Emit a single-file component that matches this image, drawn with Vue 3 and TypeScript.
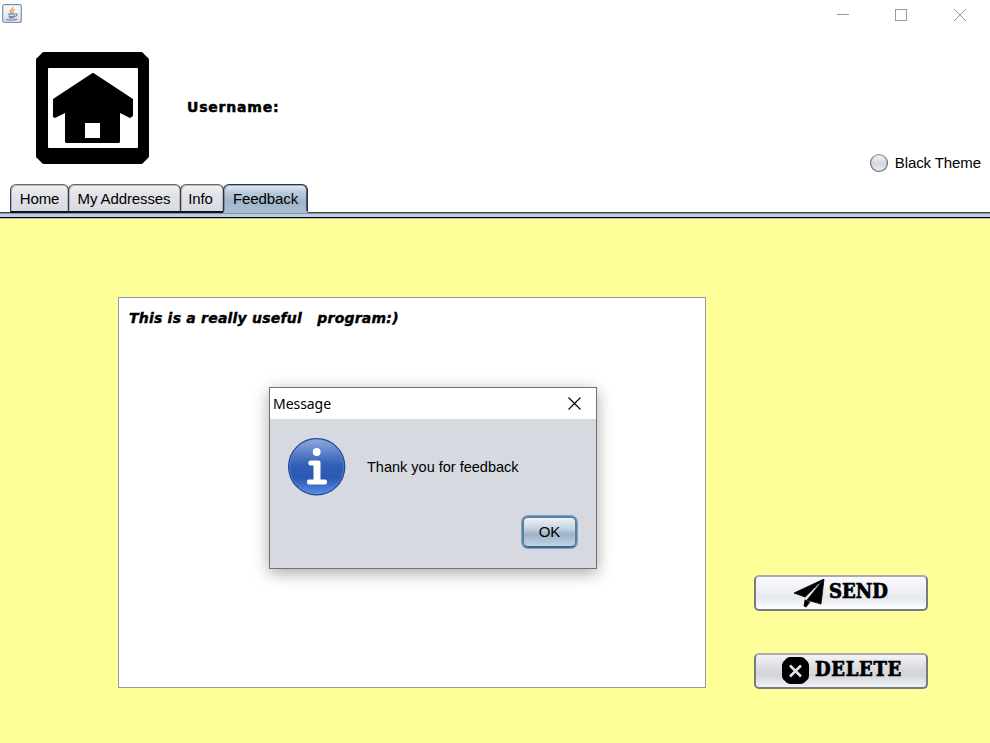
<script setup lang="ts">
import { ref } from 'vue'

const tabs = [
  { name: 'Home', cls: 'home' },
  { name: 'My Addresses', cls: 'addresses' },
  { name: 'Info', cls: 'info' },
  { name: 'Feedback', cls: 'feedback' },
]
const active = ref('Feedback')
const dialogOpen = ref(true)
const message = ref('This is a really useful \u00a0 program:)')
</script>

<template>
  <div class="window">
    <header class="titlebar">
      <svg class="java" width="20" height="20" viewBox="0 0 20 20">
        <defs>
          <linearGradient id="jbg" x1="0" y1="0" x2="0" y2="1">
            <stop offset="0" stop-color="#fdfdfe" />
            <stop offset="1" stop-color="#d9dde3" />
          </linearGradient>
        </defs>
        <rect x=".7" y=".7" width="18.6" height="17.8" rx="2" fill="url(#jbg)" stroke="#7892a9" stroke-width="1.2" />
        <path d="M10.5 3C12 5 8 5.6 8.2 7.4c.1 1 1 1.4 1.4 2M12.5 5.5c-2.2 1-2.1 1.8-1.5 2.6.4.6.1 1-.5 1.5" fill="none" stroke="#ec9148" stroke-width="1.3" />
        <path d="M6 10.2h7.3M6.5 12.1c2 .6 4.6.6 6.5 0M7 13.8c1.8.5 3.8.5 5.4 0M13.5 10c2.3-.4 2.2 2-.6 2.4M4.2 15c-.8 1.5 8.5 1.8 11 .1" fill="none" stroke="#6e8ca8" stroke-width="1.2" />
      </svg>
      <svg class="controls" width="130" height="14" viewBox="0 0 130 14" fill="none" stroke="#999">
        <path d="M0 7.5h12" />
        <rect x="58.5" y="2.5" width="11" height="11" />
        <path d="M117 2l12 12M129 2l-12 12" />
      </svg>
    </header>

    <section class="profile">
      <svg class="house" width="113" height="112" viewBox="0 0 113 112">
        <path d="M8 0h97q2 0 3 2l3 3q2 1 2 3v96q0 2-2 3l-3 3q-1 2-3 2H8q-2 0-3-2l-3-3q-2-1-2-3V8q0-2 2-3l3-3q1-2 3-2z" />
        <rect x="12" y="16" width="90" height="80" rx="1" fill="#fff" />
        <path d="M55 22q2-2 4 0l38 25v17l-3 2-10-5v29l-1 1H30l-1-1V61l-10 5-2-1V47z" />
        <rect x="49" y="71" width="15" height="15" fill="#fff" />
      </svg>
      <span class="username">Username:</span>
      <label class="theme"><span class="radio"></span><span>Black Theme</span></label>
    </section>

    <nav class="tabs">
      <button v-for="t in tabs" :key="t.name" :class="['tab', t.cls, { active: active === t.name }]" @click="active = t.name">{{ t.name }}</button>
    </nav>
    <div class="rule"></div>

    <main class="panel">
      <div class="editor">{{ message }}</div>
      <div class="actions">
        <button class="action send">
          <svg width="31" height="29" viewBox="0 0 31 29">
            <path d="M0 14L30 0 11 18zM30 0l-3 25-14-4zM11 21l5 2-4 5-2-1z" stroke="#000" stroke-width=".8" />
            <path d="M25 5L12 18l-2 3" fill="none" stroke="#b8b9bd" stroke-width=".8" stroke-dasharray="4 1" />
          </svg>
          <span>SEND</span>
        </button>
        <button class="action delete">
          <svg width="27" height="27" viewBox="0 0 27 27">
            <path d="M8 0h11q3 0 5 3 3 2 3 5v11q0 3-3 5-2 3-5 3H8q-3 0-5-3-3-2-3-5V8q0-3 3-5 2-3 5-3z" />
            <path d="M8 8.5l11 11M19 8.5l-11 11" stroke="#e2e3e7" stroke-width="2.6" />
          </svg>
          <span>DELETE</span>
        </button>
      </div>
    </main>

    <div v-if="dialogOpen" class="dialog">
      <div class="dialog-title">
        <span>Message</span>
        <svg width="13" height="13" viewBox="0 0 13 13"><path d="M.5.5l12 12M12.500.5l-12 12" stroke="#000" stroke-width="1.1" /></svg>
      </div>
      <div class="dialog-content">
        <svg class="info-icon" width="58" height="58" viewBox="0 0 58 58">
          <defs>
            <linearGradient id="blue" x1="0" y1="0" x2="0" y2="1">
              <stop offset="0" stop-color="#91abdf" />
              <stop offset=".25" stop-color="#5c80c9" />
              <stop offset=".48" stop-color="#315eb6" />
              <stop offset=".7" stop-color="#2a59b5" />
              <stop offset="1" stop-color="#5b8ce8" />
            </linearGradient>
          </defs>
          <circle cx="28.700" cy="28.700" r="28.1" fill="url(#blue)" stroke="#204694" stroke-width="1.2" />
          <circle cx="28.700" cy="28.700" r="27" fill="none" stroke="#6e92dc" stroke-width=".7" opacity=".7" />
          <g fill="#fff">
            <circle cx="28.700" cy="14" r="3.900" />
            <path d="M22.500 22.500h8q2 0 2 2V41.500H37q2 0 2 2v1q0 2-2 2H21q-2 0-2-2v-1q0-2 2-2h4.500V27.500h-3q-2.200 0-2.200-2.500t2.200-2.500z" />
          </g>
        </svg>
        <span>Thank you for feedback</span>
      </div>
      <div class="dialog-footer"><button class="ok" @click="dialogOpen = false">OK</button></div>
    </div>
  </div>
</template>

<style>
body { background: #fff; overflow: hidden; }
</style>

<style scoped>
.window { position: relative; isolation: isolate; width: 990px; height: 743px; display: flex; flex-direction: column; font: 15px/18px "Liberation Sans", Arial, sans-serif; letter-spacing: -.1px; color: #000; background: #fff; }
button { font: inherit; letter-spacing: inherit; color: inherit; box-sizing: border-box; padding: 0; margin: 0; white-space: nowrap; }
svg { display: block; flex: none; }
.titlebar { height: 30px; flex: none; box-sizing: border-box; display: flex; justify-content: space-between; align-items: flex-start; padding: 4px 23px 0 2px; }
.controls { margin-top: 3px; }
.profile { height: 154px; flex: none; box-sizing: border-box; display: flex; padding: 22px 9px 0 36px; }
.username { margin: 45px 0 0 38px; font: bold 14px/20px "DejaVu Sans", sans-serif; letter-spacing: .8px; -webkit-text-stroke: .5px #000; }
.theme { margin: 102px 0 0 auto; display: flex; align-items: center; height: 18px; gap: 7px; }
.radio { box-sizing: border-box; width: 18px; height: 18px; border: 1.5px solid #60646c; border-top-color: #8b8e95; border-radius: 50%; background: linear-gradient(#f3f3f5, #d4d7dc 55%, #eaedf1); box-shadow: inset 0 0 1px #777b83; }
.tabs { height: 28px; flex: none; display: flex; padding-left: 10px; }
.tab { height: 29px; padding-top: 2px; border: 1px solid #3c3c48; border-top-color: #66666f; border-bottom: 2px solid #101020; border-radius: 6px 6px 0 0; box-shadow: inset 1px 1px 0 #85858f80, inset -1px 0 0 #85858f80; background: linear-gradient(#f4f4f6, #e3e4e8 35%, #d9dbe1); }
.tab + .tab { margin-left: -1px; }
.home { width: 59px; }
.addresses { width: 113px; padding-right: 1px; }
.info { width: 44px; padding-right: 3px; }
.feedback { width: 85px; }
.tab.active { border-color: #25384f; border-bottom-color: #a9bed5; box-shadow: inset 1px 1px 0 #50637a80, inset -1px 0 0 #25384fc0; background: linear-gradient(#e5edf4, #b8c9da 30%, #9fb5c9 65%, #a9bed3); }
.rule { height: 6px; flex: none; box-sizing: border-box; border-top: 1px solid #444652; border-bottom: 1px solid #000014; background: #b9cde5; box-shadow: inset 0 1px #8693a9; position: relative; z-index: -1; }
.panel { flex: 1; background: #ffff99; border-top: 1px solid #c6c691; box-sizing: border-box; display: flex; padding: 78px 0 0 118px; gap: 48px; }
.editor { width: 588px; height: 391px; flex: none; box-sizing: border-box; border: 1px solid #9297a1; background: #fff; padding: 10px 10px; font: italic bold 14px/20px "DejaVu Sans", sans-serif; letter-spacing: .22px; -webkit-text-stroke: .4px #000; white-space: pre; }
.actions { display: flex; flex-direction: column; gap: 42px; padding-top: 278px; }
.action { width: 174px; height: 36px; border: 2px solid #777b85; border-top-color: #aaaab0; border-radius: 5px; display: flex; align-items: center; justify-content: center; font: bold 20px/22px "DejaVu Serif Condensed", "DejaVu Serif", serif; font-stretch: condensed; -webkit-text-stroke: .7px #000; }
.action span { margin-top: -5px; }
.send { gap: 4px; letter-spacing: 0; background: linear-gradient(#fafafd, #eeeff5 45%, #e5e8f0 65%, #fff); }
.delete { gap: 6px; padding-left: 2px; letter-spacing: .7px; background: linear-gradient(#f3f3f5, #d9dae0 45%, #d2d4da 62%, #f0f2f8); }
.delete svg { margin-top: -1px; }
.dialog { position: absolute; left: 269px; top: 387px; width: 328px; height: 182px; box-sizing: border-box; border: 1px solid #717176; background: #d6d9e0; box-shadow: 0 4px 15px rgba(0, 0, 0, .34); }
.dialog-title { height: 31px; box-sizing: border-box; display: flex; align-items: center; justify-content: space-between; padding: 0 15px 1px 3px; background: #fff; font: 14px/20px "Noto Sans", sans-serif; letter-spacing: -.05px; }
.dialog-title span { padding-top: 2px; }
.dialog-content { height: 96px; display: flex; align-items: center; padding-left: 18px; gap: 21px; font-size: 14.5px; letter-spacing: 0; }
.dialog-footer { display: flex; justify-content: flex-end; padding-right: 19px; }
.ok { width: 55px; height: 32px; margin-top: 1px; border: 2px solid #5a7f9f; border-bottom-color: #48647f; border-radius: 6px; box-shadow: 0 0 0 1px #78a5ce; background: linear-gradient(#eef4f9, #c1d0de 40%, #9eb3c7 58%, #bfd3e6); }
</style>
